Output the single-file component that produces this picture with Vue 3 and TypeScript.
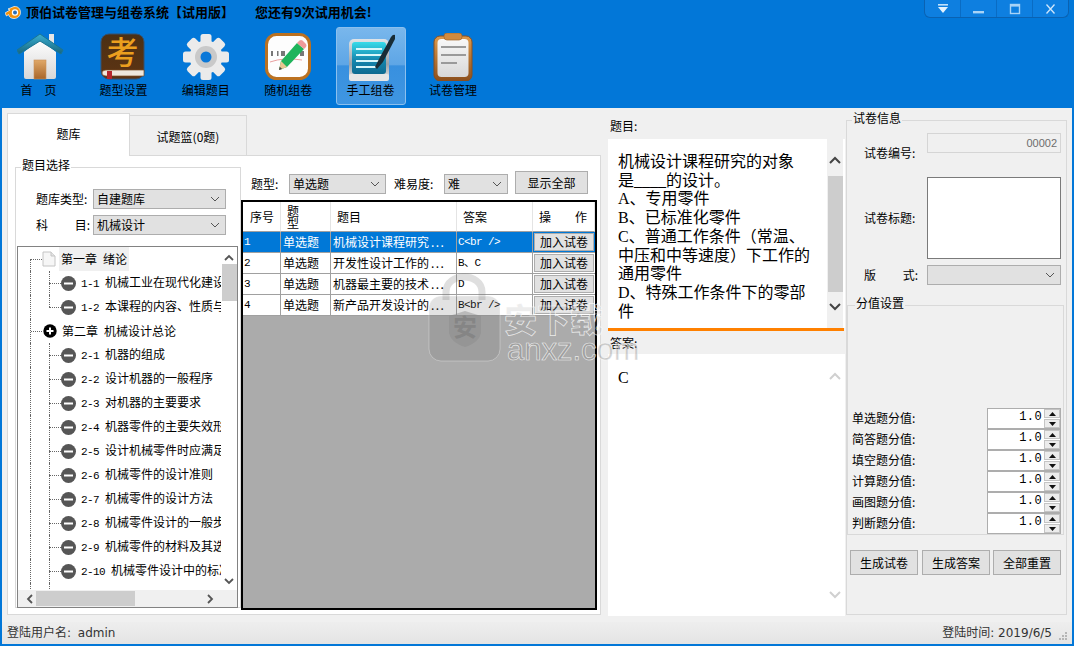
<script setup lang="ts">
interface TreeRow { level: number; num?: string; text: string; kind: string; last?: boolean }
const tools = ['首　页', '题型设置', '编辑题目', '随机组卷', '手工组卷', '试卷管理']
const treeRows: TreeRow[] = [
  { level: 1, text: '第一章\u2002绪论', kind: 'doc' },
  { level: 2, num: '1-1', text: '机械工业在现代化建设中的作用', kind: 'minus' },
  { level: 2, num: '1-2', text: '本课程的内容、性质与任务', kind: 'minus', last: true },
  { level: 1, text: '第二章\u2002机械设计总论', kind: 'plus' },
  { level: 2, num: '2-1', text: '机器的组成', kind: 'minus' },
  { level: 2, num: '2-2', text: '设计机器的一般程序', kind: 'minus' },
  { level: 2, num: '2-3', text: '对机器的主要要求', kind: 'minus' },
  { level: 2, num: '2-4', text: '机器零件的主要失效形式', kind: 'minus' },
  { level: 2, num: '2-5', text: '设计机械零件时应满足的要求', kind: 'minus' },
  { level: 2, num: '2-6', text: '机械零件的设计准则', kind: 'minus' },
  { level: 2, num: '2-7', text: '机械零件的设计方法', kind: 'minus' },
  { level: 2, num: '2-8', text: '机械零件设计的一般步骤', kind: 'minus' },
  { level: 2, num: '2-9', text: '机械零件的材料及其选用', kind: 'minus' },
  { level: 2, num: '2-10', text: '机械零件设计中的标准化', kind: 'minus' }
]
const questions = [
  { id: '1', title: '机械设计课程研究', answer: 'C<br />' },
  { id: '2', title: '开发性设计工作的', answer: 'B、C' },
  { id: '3', title: '机器最主要的技术', answer: 'D' },
  { id: '4', title: '新产品开发设计的', answer: 'B<br />' }
]
const questionLines = [
  '机械设计课程研究的对象', '是____的设计。', 'A、专用零件', 'B、已标准化零件',
  'C、普通工作条件（常温、', '中压和中等速度）下工作的', '通用零件', 'D、特殊工作条件下的零部', '件'
]
const scores = ['单选题分值:', '简答题分值:', '填空题分值:', '计算题分值:', '画图题分值:', '判断题分值:']
const gearAngles = [0, 45, 90, 135, 180, 225, 270, 315]
</script>

<template>
  <div class="window">
    <header class="titlebar">
      <svg class="logo" viewBox="0 0 16 14" width="16" height="14">
        <path d="M0 8 L5 5 L3 4 L9 1.5 C13 1 15.5 4 15.5 7.5 C15.5 11 12.5 13.5 9 13.5 C6 13.5 4 12 3.5 9.5 L1.5 11 Z" fill="#f2920f" stroke="#fff" stroke-width=".7"/>
        <circle cx="10" cy="7.5" r="3.2" fill="#fff"/>
        <circle cx="10" cy="7.5" r="2" fill="#2a6fb8"/>
      </svg>
      <span class="app-title">顶伯试卷管理与组卷系统【试用版】</span>
      <span class="app-trial">您还有9次试用机会!</span>
      <div class="winbtns">
        <div class="winbtn"><svg width="14" height="12" viewBox="0 0 14 12"><rect x="2" y="1" width="10" height="1.6" fill="#bfe0fb"/><path d="M2 4h10l-5 6z" fill="#e4f2fd"/></svg></div>
        <div class="winbtn"><svg width="14" height="12" viewBox="0 0 14 12"><rect x="1" y="8" width="11" height="2.4" fill="#a9d3f6"/></svg></div>
        <div class="winbtn"><svg width="14" height="12" viewBox="0 0 14 12"><rect x="2.5" y="1.5" width="9" height="9" fill="none" stroke="#a9d3f6" stroke-width="1.4"/><rect x="2" y="1" width="10" height="2.6" fill="#a9d3f6"/></svg></div>
        <div class="winbtn"><svg width="14" height="12" viewBox="0 0 14 12"><path d="M2.5 1.5l8 9M10.5 1.5l-8 9" stroke="#cfe6fb" stroke-width="1.3"/></svg></div>
      </div>
    </header>

    <nav class="toolbar">
      <div v-for="(t, i) in tools" :key="t" class="tool" :class="{ active: i === 4 }">
        <svg v-if="i === 0" class="ticon" viewBox="0 0 48 48">
          <defs>
            <linearGradient id="roof" x1="0" y1="0" x2="0" y2="1"><stop offset="0" stop-color="#3bb0d3"/><stop offset="1" stop-color="#16667f"/></linearGradient>
            <linearGradient id="wall" x1="0" y1="0" x2="0" y2="1"><stop offset="0" stop-color="#ffffff"/><stop offset="1" stop-color="#d7d7d7"/></linearGradient>
            <linearGradient id="door" x1="0" y1="0" x2="0" y2="1"><stop offset="0" stop-color="#e0a868"/><stop offset="1" stop-color="#a8662a"/></linearGradient>
          </defs>
          <rect x="32" y="1" width="5" height="14" fill="#e6e6e6"/>
          <path d="M7 19 L23 6 L39 19 V44 Q39 46 37 46 H9 Q7 46 7 44 Z" fill="url(#wall)"/>
          <path d="M0 17 L23 1 L46 17 L44 21 L23 8 L2 21 Z" fill="url(#roof)" stroke="#1a7593" stroke-width="1" stroke-linejoin="round"/>
          <rect x="17" y="27" width="12" height="19" fill="url(#door)" stroke="#c99058" stroke-width=".6"/>
        </svg>
        <svg v-else-if="i === 1" class="ticon" viewBox="0 0 48 48">
          <defs><linearGradient id="book" x1="0" y1="0" x2="0" y2="1"><stop offset="0" stop-color="#4b3014"/><stop offset="1" stop-color="#5e3413"/></linearGradient></defs>
          <rect x="2" y="1" width="43" height="45" rx="8" fill="url(#book)" stroke="#38506a"/>
          <text x="23.5" y="31" class="kao">考</text>
          <path d="M3 40 Q3 37 7 37 H45 V43 H7 Q3 43 3 40 Z" fill="#efe7dc" stroke="#7a4a22" stroke-width=".7"/>
          <rect x="8" y="38" width="5" height="8" fill="#b5252b"/>
        </svg>
        <svg v-else-if="i === 2" class="ticon" viewBox="0 0 48 48">
          <g fill="#ebebeb">
            <rect v-for="a in gearAngles" :key="a" x="18.5" y="1" width="11" height="11" rx="2.5" :transform="`rotate(${a} 24 24)`"/>
            <circle cx="24" cy="24" r="16.5"/>
          </g>
          <circle cx="24" cy="24" r="11" fill="#c9c9c9"/>
          <circle cx="24" cy="24" r="5.5" fill="#0a78d8"/>
        </svg>
        <svg v-else-if="i === 3" class="ticon" viewBox="0 0 48 48">
          <rect x="2.5" y="1.5" width="43" height="44" rx="10" fill="#fdfdfd" stroke="#bb7120" stroke-width="3"/>
          <path d="M6 29 Q20 24 38 27" stroke="#e9a0a0" fill="none" stroke-width="1"/>
          <g fill="#777"><rect x="7" y="18" width="2" height="5"/><rect x="13" y="18" width="1.5" height="5"/><rect x="17" y="18" width="4" height="5"/><rect x="36" y="18" width="4" height="5"/></g>
          <path d="M15 37 L17 28 L33 10 L40 16 L23 34 Z" fill="#1fb45b"/>
          <path d="M33 10 L35.5 7.5 Q37 6.5 38.5 7.5 L42 11 Q43 12.5 42 14 L40 16 Z" fill="#ef9a9a"/>
          <path d="M15 37 L17 28 L23 34 Z" fill="#e9c691"/>
          <path d="M15 37 L15.7 33.8 L18.2 36 Z" fill="#444"/>
        </svg>
        <svg v-else-if="i === 4" class="ticon" viewBox="0 0 48 48">
          <defs>
            <linearGradient id="screen" x1="0" y1="0" x2="0" y2="1"><stop offset="0" stop-color="#37dbe9"/><stop offset=".55" stop-color="#1488b0"/><stop offset="1" stop-color="#0e6a90"/></linearGradient>
            <linearGradient id="frame" x1="0" y1="0" x2="0" y2="1"><stop offset="0" stop-color="#dfe4e8"/><stop offset=".6" stop-color="#9aa2a8"/><stop offset="1" stop-color="#eeeeee"/></linearGradient>
          </defs>
          <rect x="2" y="6" width="40" height="42" rx="5" fill="url(#frame)"/>
          <rect x="2" y="41" width="40" height="7" rx="2" fill="#e6e6e6"/>
          <rect x="5" y="9" width="34" height="32" rx="3" fill="url(#screen)"/>
          <g fill="#d8f6fa"><rect x="9" y="15" width="26" height="2"/><rect x="9" y="21" width="26" height="2"/><rect x="9" y="27" width="24" height="2"/><rect x="9" y="33" width="20" height="2"/></g>
          <path d="M28 34 L32 26 L44 4 Q46 1 48 2 L48 6 L36 29 L30 36 Z" fill="#182c36"/>
        </svg>
        <svg v-else class="ticon" viewBox="0 0 48 48">
          <defs>
            <linearGradient id="clip" x1="0" y1="0" x2="0" y2="1"><stop offset="0" stop-color="#dd9a4c"/><stop offset="1" stop-color="#8c4f1c"/></linearGradient>
            <linearGradient id="paper" x1="0" y1="0" x2="0" y2="1"><stop offset="0" stop-color="#f8f8f8"/><stop offset="1" stop-color="#d8d8d8"/></linearGradient>
          </defs>
          <rect x="5" y="3" width="38" height="45" rx="6" fill="url(#clip)" stroke="#8a4f1f"/>
          <rect x="8.5" y="6" width="31" height="38" rx="4" fill="url(#paper)"/>
          <rect x="15" y="0" width="18" height="7" rx="3" fill="#d08a3e" stroke="#a06428" stroke-width=".7"/>
          <g fill="#9a9a9a"><rect x="12" y="13" width="25" height="2"/><rect x="12" y="21" width="25" height="2"/><rect x="12" y="29" width="16" height="2"/></g>
        </svg>
        <span class="tlabel">{{ t }}</span>
      </div>
    </nav>

    <main class="body">
      <section class="leftcol">
        <div class="tabs">
          <div class="tab on">题库</div>
          <div class="tab off">试题篮(0题)</div>
        </div>
        <div class="tabpanel">
          <div class="group selectgroup">
            <div class="legend">题目选择</div>
            <div class="frow first">
              <span class="flabel">题库类型:</span>
              <div class="select wide"><span>自建题库</span><svg class="chev" width="10" height="6" viewBox="0 0 10 6"><path d="M1 1l4 4 4-4" fill="none" stroke="#555"/></svg></div>
            </div>
            <div class="frow">
              <span class="flabel spread"><i>科</i><i>目:</i></span>
              <div class="select wide"><span>机械设计</span><svg class="chev" width="10" height="6" viewBox="0 0 10 6"><path d="M1 1l4 4 4-4" fill="none" stroke="#555"/></svg></div>
            </div>
            <div class="tree">
              <div class="treeview">
                <div v-for="(r, i) in treeRows" :key="i" class="trow" :class="r.level === 1 ? 'l1' : 'l2'">
                  <span v-if="r.level === 2" class="vl" :class="{ half: r.last }"></span>
                  <svg v-if="r.kind === 'doc'" class="ticn doc" width="14" height="16" viewBox="0 0 14 16"><path d="M1 1h8l4 4v10H1z" fill="#f6f6f6" stroke="#c4c4c4"/><path d="M9 1v4h4" fill="#e4e4e4" stroke="#c4c4c4"/></svg>
                  <svg v-else-if="r.kind === 'plus'" class="ticn plus" width="14" height="14" viewBox="0 0 14 14"><circle cx="7" cy="7" r="6.7" fill="#000"/><path d="M3.5 7h7M7 3.5v7" stroke="#fff" stroke-width="2"/></svg>
                  <svg v-else class="ticn minus" width="15" height="15" viewBox="0 0 15 15"><circle cx="7.5" cy="7.5" r="7.5" fill="#565656"/><rect x="3" y="6.5" width="9" height="2" fill="#fff"/></svg>
                  <span class="ttext" :class="{ current: i === 0 }"><span v-if="r.num" class="tnum">{{ r.num }}</span>{{ r.text }}</span>
                </div>
                <div class="trow l2 tail"><span class="vl"></span></div>
              </div>
              <div class="vbar">
                <svg class="bar-arrow" width="10" height="7" viewBox="0 0 10 7"><path d="M1 6l4-4 4 4" fill="none" stroke="#555" stroke-width="1.8"/></svg>
                <div class="vthumb"></div>
                <svg class="bar-arrow down" width="10" height="7" viewBox="0 0 10 7"><path d="M1 1l4 4 4-4" fill="none" stroke="#555" stroke-width="1.8"/></svg>
              </div>
              <div class="hbar">
                <svg width="7" height="10" viewBox="0 0 7 10"><path d="M6 1L2 5l4 4" fill="none" stroke="#555" stroke-width="1.8"/></svg>
                <div class="hthumb"></div>
                <svg width="7" height="10" viewBox="0 0 7 10"><path d="M1 1l4 4-4 4" fill="none" stroke="#555" stroke-width="1.8"/></svg>
              </div>
            </div>
          </div>

          <div class="listside">
            <div class="filters">
              <span class="f1">题型:</span>
              <div class="select type"><span>单选题</span><svg class="chev" width="10" height="6" viewBox="0 0 10 6"><path d="M1 1l4 4 4-4" fill="none" stroke="#555"/></svg></div>
              <span class="f2">难易度:</span>
              <div class="select diff"><span>难</span><svg class="chev" width="10" height="6" viewBox="0 0 10 6"><path d="M1 1l4 4 4-4" fill="none" stroke="#555"/></svg></div>
              <button class="btn showall">显示全部</button>
            </div>
            <div class="tablewrap">
              <table class="qtable">
                <colgroup><col class="c1"/><col class="c2"/><col class="c3"/><col class="c4"/><col class="c5"/></colgroup>
                <thead>
                  <tr>
                    <th class="h1">序号</th>
                    <th class="h2">题<br/>型</th>
                    <th class="h3">题目</th>
                    <th class="h4">答案</th>
                    <th class="h5"><span>操</span><span>作</span></th>
                  </tr>
                </thead>
                <tbody>
                  <tr v-for="(q, i) in questions" :key="q.id" :class="{ sel: i === 0 }">
                    <td class="mono">{{ q.id }}</td>
                    <td>单选题</td>
                    <td>{{ q.title }}<span class="dots">...</span></td>
                    <td class="mono">{{ q.answer }}</td>
                    <td class="opcell"><button class="btn op">加入试卷</button></td>
                  </tr>
                </tbody>
              </table>
            </div>
          </div>
        </div>
      </section>

      <section class="midcol">
        <div class="midlabel top">题目:</div>
        <div class="textbox question">
          <div class="textcontent">
            <div v-for="l in questionLines" :key="l" class="qline">{{ l }}</div>
          </div>
          <div class="midbar">
            <svg width="12" height="8" viewBox="0 0 12 8"><path d="M1 7l5-5 5 5" fill="none" stroke="#444" stroke-width="2"/></svg>
            <div class="midthumb"></div>
            <svg width="12" height="8" viewBox="0 0 12 8"><path d="M1 1l5 5 5-5" fill="none" stroke="#444" stroke-width="2"/></svg>
          </div>
        </div>
        <div class="splitter"></div>
        <div class="midlabel ans">答案:</div>
        <div class="textbox answer">
          <div class="textcontent anspad"><div class="qline">C</div></div>
          <div class="midbar pale">
            <svg width="12" height="8" viewBox="0 0 12 8"><path d="M1 7l5-5 5 5" fill="none" stroke="#d0d0d0" stroke-width="2"/></svg>
            <svg width="12" height="8" viewBox="0 0 12 8"><path d="M1 1l5 5 5-5" fill="none" stroke="#d0d0d0" stroke-width="2"/></svg>
          </div>
        </div>
      </section>

      <section class="rightcol">
        <div class="group info">
          <div class="legend gray">试卷信息</div>
          <div class="irow r1">
            <span class="ilabel">试卷编号:</span>
            <div class="readonly">00002</div>
          </div>
          <div class="irow r2">
            <span class="ilabel">试卷标题:</span>
            <div class="titlebox"></div>
          </div>
          <div class="irow r3">
            <span class="ilabel spread2"><i>版</i><i>式:</i></span>
            <div class="select layout"><svg class="chev" width="10" height="6" viewBox="0 0 10 6"><path d="M1 1l4 4 4-4" fill="none" stroke="#555"/></svg></div>
          </div>
          <div class="group scoregroup">
            <div class="legend gray scorelegend">分值设置</div>
            <div v-for="s in scores" :key="s" class="srow">
              <span class="slabel">{{ s }}</span>
              <div class="spin">
                <span class="sval">1.0</span>
                <div class="spinbtns">
                  <div class="sbtn"><svg width="7" height="4" viewBox="0 0 7 4"><path d="M0 4l3.5-4L7 4z" fill="#111"/></svg></div>
                  <div class="sbtn"><svg width="7" height="4" viewBox="0 0 7 4"><path d="M0 0l3.5 4L7 0z" fill="#111"/></svg></div>
                </div>
              </div>
            </div>
          </div>
          <div class="actions">
            <button class="btn act">生成试卷</button>
            <button class="btn act">生成答案</button>
            <button class="btn act">全部重置</button>
          </div>
        </div>
      </section>
    </main>

    <footer class="status">
      <span class="status-left">登陆用户名: admin</span>
      <span class="status-right">登陆时间: 2019/6/5</span>
      <svg class="grip" width="10" height="10" viewBox="0 0 10 10"><g fill="#b5b5b5"><rect x="7" y="1" width="2" height="2"/><rect x="4" y="4" width="2" height="2"/><rect x="7" y="4" width="2" height="2"/><rect x="1" y="7" width="2" height="2"/><rect x="4" y="7" width="2" height="2"/><rect x="7" y="7" width="2" height="2"/></g></svg>
    </footer>

    <svg class="watermark" width="240" height="100" viewBox="0 0 240 100">
      <path d="M26 30 V22 C26 2 62 2 62 22 V30" fill="none" stroke="#6e6e6e" stroke-opacity=".22" stroke-width="7"/>
      <rect x="9" y="26" width="71" height="65" rx="12" fill="#6e6e6e" fill-opacity=".2" stroke="#fff" stroke-opacity=".3"/>
      <path d="M29 46 L45 41 L61 46 V62 Q60 72 45 77 Q30 72 29 62 Z" fill="#8a8a8a" fill-opacity=".45"/>
      <text x="45" y="66" class="wm-an">安</text>
      <text x="84" y="62" class="wm-cn">安下载</text>
      <text x="87" y="90" class="wm-en">anxz.com</text>
    </svg>
  </div>
</template>

<style>
html, body { margin: 0; padding: 0; background: #0277d8; }
</style>

<style scoped>
.window {
  position: relative; width: 1074px; height: 646px; overflow: hidden;
  display: flex; flex-direction: column; background: #0277d8; color: #000;
  font-family: "Noto Sans CJK SC", "Liberation Sans", sans-serif; font-size: 12px; line-height: 16px;
}
.titlebar { height: 27px; display: flex; align-items: flex-start; flex: none; position: relative; }
.logo { margin: 5px 0 0 5px; flex: none; }
.app-title { margin: 4px 0 0 5px; width: 229px; font-size: 13px; font-weight: 700; white-space: nowrap; }
.app-trial { margin-top: 4px; font-size: 13px; font-weight: 700; white-space: nowrap; }
.winbtns {
  margin-left: auto; margin-right: 5px; width: 145px; height: 18px; display: flex;
  background: #0e7fe0; border: 1px solid #0a62b2; border-top: 0; border-radius: 0 0 6px 6px; box-sizing: border-box;
}
.winbtn { flex: 1; display: flex; align-items: center; justify-content: center; border-right: 1px solid #0a6cc4; }
.winbtn:last-child { border-right: 0; }
.toolbar { height: 81px; flex: none; display: flex; padding-left: 6px; gap: 12.4px; box-sizing: border-box; }
.tool { width: 70px; height: 78px; display: flex; flex-direction: column; align-items: center; box-sizing: border-box; padding-top: 6px; }
.tool.active {
  background: linear-gradient(#79b7ec 0, #5ea6e6 48%, #3890df 50%, #3f96e2 100%);
  border: 1px solid #8cc0ee; border-radius: 3px; padding-top: 5px;
}
.ticon { width: 48px; height: 48px; flex: none; }
.kao { font-size: 32px; font-weight: 500; fill: #eb9f1e; text-anchor: middle; font-family: "Noto Sans CJK SC", sans-serif; }
.tlabel { font-size: 12px; line-height: 16px; margin-top: 1px; white-space: nowrap; }
.tool:first-child .tlabel { margin-right: 5px; }

.body { flex: 1; min-height: 0; margin: 0 2px; background: #f0f0f0; display: flex; padding-left: 5px; }
.leftcol { width: 594px; flex: none; padding-top: 5px; }
.tabs { height: 42px; display: flex; align-items: flex-end; }
.tab { text-align: center; box-sizing: border-box; }
.tab.on { width: 123px; height: 43px; background: #fff; border: 1px solid #d9d9d9; border-bottom: 0; line-height: 40px; position: relative; z-index: 1; margin-bottom: -1px; }
.tab.off { width: 117px; height: 40px; background: #f0f0f0; border: 1px solid #d9d9d9; border-left: 0; border-bottom: 0; line-height: 41px; }
.tabpanel { height: 460px; background: #fff; border: 1px solid #d9d9d9; box-sizing: border-box; display: flex; padding: 11px 0 0 7px; }
.group { border: 1px solid #d9d9d9; box-sizing: border-box; }
.legend { width: fit-content; height: 16px; margin: -11px 0 3px 5px; padding: 0 1px; background: #fff; line-height: 16px; }
.legend.gray { background: #f0f0f0; }
.selectgroup { width: 226px; height: 441px; flex: none; }
.frow { display: flex; align-items: center; margin: 6px 0 0 20px; height: 20px; }
.frow.first { margin-top: 16px; }
.flabel { width: 57px; flex: none; }
.flabel.spread, .spread2 { display: flex; justify-content: space-between; padding-right: 3px; box-sizing: border-box; }
i { font-style: normal; }
.select {
  height: 20px; box-sizing: border-box; background: #e1e1e1; border: 1px solid #adadad;
  display: flex; align-items: center; justify-content: space-between; padding: 0 5px 0 3px; white-space: nowrap;
}
.select.wide { width: 133px; }
.chev { flex: none; margin-left: auto; }
.tree {
  width: 221px; height: 362px; margin: 11px 0 0 1px; box-sizing: border-box; border: 1px solid #828282;
  display: grid; grid-template-columns: 203px 16px; grid-template-rows: 343px 17px; background: #f0f0f0;
}
.treeview { background: #fff; overflow: hidden; position: relative; }
.trow { height: 24px; display: flex; align-items: center; position: relative; white-space: nowrap; }
.trow::before { content: ""; position: absolute; left: 12px; top: 0; bottom: 0; border-left: 1px dotted #666; }
.trow:first-child::before { top: 12px; }
.trow.l1::after { content: ""; position: absolute; left: 13px; width: 11px; top: 12px; border-top: 1px dotted #666; }
.trow.l2::after { content: ""; position: absolute; left: 31px; width: 12px; top: 12px; height: 0; border-top: 1px dotted #666; }
.vl { position: absolute; left: 31px; top: 0; bottom: 0; border-left: 1px dotted #666; }
.vl.half { bottom: 12px; }
.ticn { flex: none; position: relative; z-index: 1; background: #fff; }
.ticn.doc { margin-left: 24px; }
.ticn.plus { margin-left: 25px; }
.ticn.minus { margin-left: 43px; }
.trow.tail { height: 10px; }
.trow.tail::after { display: none; }
.ttext { line-height: 24px; padding: 0 2px; position: relative; }
.trow.l1 .ttext { margin-left: 3px; }
.trow.l2 .ttext { margin-left: 3px; }
.ttext.current { background: #f0f0f0; }
.tnum { font-family: "Liberation Mono", monospace; font-size: 11px; letter-spacing: -.6px; margin-right: 6px; }
.vbar { background: #fff; display: flex; flex-direction: column; align-items: center; }
.bar-arrow { margin-top: 7px; flex: none; }
.bar-arrow.down { margin-top: auto; margin-bottom: 5px; }
.vthumb { width: 15px; height: 37px; background: #cdcdcd; margin-top: 3px; }
.hbar { grid-column: 1 / 3; display: flex; align-items: center; padding-left: 8px; background: #f0f0f0; }
.hthumb { width: 99px; height: 15px; margin-left: 3px; background: #cdcdcd; }
.hbar svg:last-child { margin-left: 72px; }

.listside { width: 356px; flex: none; }
.filters { height: 32px; margin-top: 1px; display: flex; align-items: center; white-space: nowrap; padding-left: 10px; }
.f1 { width: 38px; }
.select.type { width: 97px; }
.f2 { width: 50px; margin-left: 8px; }
.select.diff { width: 64px; }
.btn { font: inherit; color: #000; background: #e1e1e1; border: 1px solid #adadad; padding: 0; box-sizing: border-box; line-height: 14px; }
.btn.showall { width: 73px; height: 23px; margin-left: 7px; margin-top: -3px; }
.tablewrap { height: 410px; box-sizing: border-box; border: 2px solid #000; background: #ababab; }
.qtable { width: 352px; table-layout: fixed; border-collapse: separate; border-spacing: 0; background: #fff; }
.c1 { width: 38px; } .c2 { width: 50px; } .c3 { width: 126px; } .c4 { width: 76px; } .c5 { width: 62px; }
.qtable th { height: 30px; padding: 0; text-align: left; font-weight: 400; border-right: 1px solid #e4e4e4; border-bottom: 1px solid #a0a0a0; box-sizing: border-box; line-height: 12px; }
.h1 { padding-left: 7px !important; }
.h2 { padding-left: 6px !important; }
.h3 { padding-left: 6px !important; }
.h4 { padding-left: 6px !important; }
.h5 > span:first-child { margin-left: 6px; margin-right: 24px; }
.qtable td { height: 21px; padding: 0 0 0 2px; border-right: 1px solid #a0a0a0; border-bottom: 1px solid #a0a0a0; box-sizing: border-box; white-space: nowrap; overflow: hidden; line-height: 20px; }
.qtable td.mono { font-family: "Liberation Mono", "Noto Sans CJK SC", monospace; font-size: 11px; letter-spacing: -.6px; padding-left: 1px; }
.dots { letter-spacing: 1.4px; margin-left: 2px; }
.qtable tr.sel td { background: #0078d7; color: #fff; }
.qtable td.opcell { padding: 0 0 0 1px; background: #fff !important; border-right: 0; }
.qtable tr.sel td.opcell { background: #0078d7 !important; }
.btn.op { width: 60px; height: 18px; display: block; color: #000; }

.midcol { width: 237px; margin-left: 7px; flex: none; display: flex; flex-direction: column; }
.midlabel { height: 16px; }
.midlabel.top { margin-top: 10px; margin-bottom: 5px; padding-left: 2px; }
.midlabel.ans { margin: 4px 0 3px; padding-left: 2px; }
.textbox { display: flex; background: #fff; }
.question { height: 189px; }
.answer { height: 262px; }
.textcontent { width: 219px; box-sizing: border-box; padding: 14px 0 0 10px; overflow: hidden; font-size: 16px; line-height: 18.7px; flex: none; font-family: "Liberation Serif", "Noto Sans CJK SC", serif; }
.anspad { padding-top: 15px; }
.qline { white-space: nowrap; }
.midbar { width: 16px; background: #f0f0f0; display: flex; flex-direction: column; align-items: center; justify-content: space-between; padding: 17px 0 17px; box-sizing: border-box; }
.midthumb { width: 15px; height: 116px; background: #cdcdcd; }
.midbar.pale { background: #fff; padding: 18px 0 17px; }
.splitter { height: 3px; width: 236px; background: #ff8000; }

.rightcol { width: 223px; flex: none; padding-top: 12px; }
.group.info { width: 221px; height: 495px; margin-left: 1px; background: #f0f0f0; }
.irow { display: flex; margin-left: 17px; }
.ilabel { width: 63px; flex: none; }
.r1 { margin-top: 7px; height: 30px; }
.r1 .ilabel { align-self: flex-end; line-height: 20px; }
.readonly { width: 134px; height: 20px; box-sizing: border-box; border: 1px solid #d5d5d5; color: #6d6d6d; text-align: right; padding-right: 3px; font-size: 11px; line-height: 18px; font-family: "Liberation Sans", sans-serif; }
.r2 { margin-top: 14px; align-items: center; }
.titlebox { width: 134px; height: 82px; background: #fff; border: 1px solid #7a7a7a; box-sizing: border-box; }
.r3 { margin-top: 6px; align-items: center; }
.spread2 { padding-right: 9px; }
.select.layout { width: 134px; }
.group.scoregroup { width: 217px; height: 230px; margin: 20px 0 0 0; display: flex; flex-direction: column; }
.scorelegend { margin-left: 7px; margin-bottom: auto; }
.srow { height: 21px; display: flex; align-items: center; padding-left: 4px; }
.slabel { width: 135px; flex: none; margin-top: -2px; }
.spin { width: 74px; height: 21px; box-sizing: border-box; background: #fff; border: 1px solid #adadad; display: flex; align-items: center; }
.sval { flex: 1; text-align: right; padding-right: 2px; font-family: "Liberation Mono", monospace; font-size: 12px; letter-spacing: .4px; line-height: 16px; margin-top: -3px; }
.spinbtns { width: 16px; height: 19px; flex: none; display: flex; flex-direction: column; gap: 1px; }
.sbtn { flex: 1; background: #ececec; border: 1px solid #c4c4c4; box-sizing: border-box; display: flex; align-items: center; justify-content: center; }
.actions { display: flex; gap: 4px; margin: 15px 0 0 3px; }
.btn.act { width: 68px; height: 25px; }
.btn.act:last-child { margin-left: -1px; }

.status { height: 22px; flex: none; margin: 0 2px 2px; background: linear-gradient(#eeeeee, #e4e4e4); display: flex; align-items: center; padding-left: 5px; color: #333; font-family: "DejaVu Sans", "Noto Sans CJK SC", sans-serif; }
.status-left { word-spacing: 3px; }
.status-right { margin-left: auto; margin-right: 6px; }
.grip { flex: none; margin: 6px 4px 0 0; }
.watermark { position: absolute; left: 420px; top: 270px; pointer-events: none; }
.wm-an { font-size: 24px; font-weight: 700; fill: #777; fill-opacity: .55; text-anchor: middle; font-family: "Noto Sans CJK SC", sans-serif; }
.wm-cn { font-size: 33px; font-weight: 900; fill: rgba(160,160,160,.2); stroke: #fff; stroke-opacity: .8; stroke-width: .7; font-family: "Noto Sans CJK SC", sans-serif; }
.wm-en { font-size: 31px; fill: rgba(140,140,140,.4); stroke: #fff; stroke-opacity: .8; stroke-width: .6; font-family: "Liberation Sans", sans-serif; }
</style>
